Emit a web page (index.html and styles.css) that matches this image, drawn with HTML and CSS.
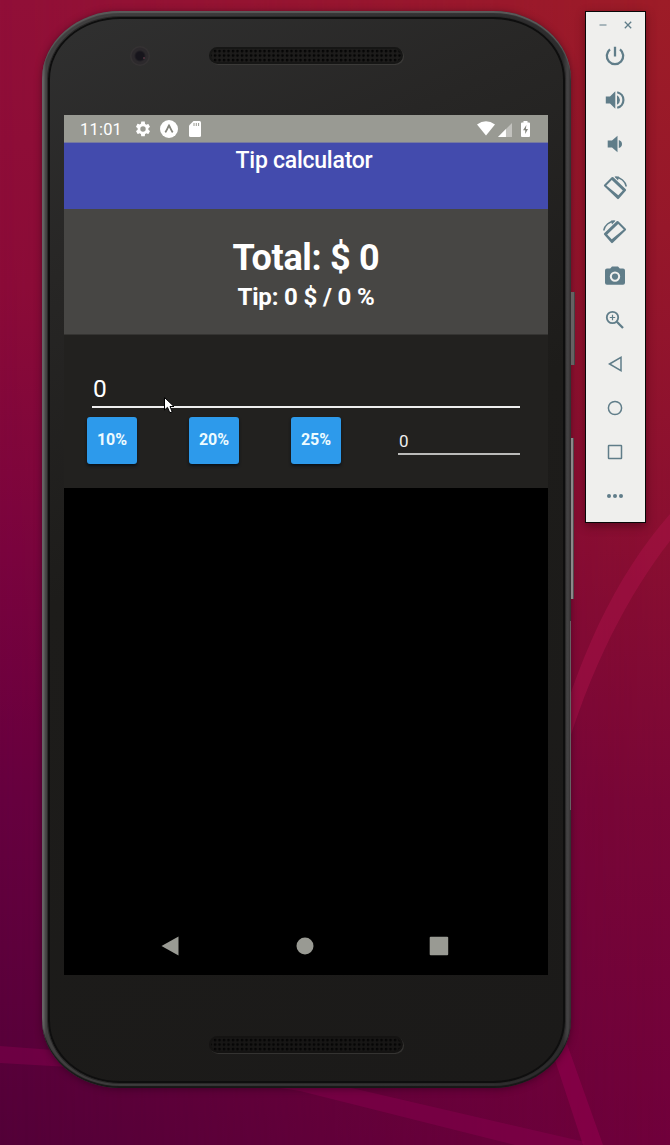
FILE: index.html
```html
<!DOCTYPE html>
<html lang="en">
<head>
<meta charset="utf-8">
<title>Tip calculator</title>
<link rel="stylesheet" href="styles.css">
</head>
<body>
<svg class="wallpaper" viewBox="0 0 670 1145" aria-hidden="true">
  <path d="M670 514C615 576 574 665 550 765L562 765C589 668 630 592 670 541Z" fill="#b0124d" opacity=".42"/>
  <path d="M0 1046L200 1061L330 1083L585 1142L582 1145H515L300 1091L190 1074L0 1063Z" fill="#8f0052" opacity=".4"/>
  <path d="M555 1060L567 1044L603 1145H583Z" fill="#93004f" opacity=".55"/>
</svg>
<main class="desktop">
  <section class="phone">
    <div class="bezel">
      <div class="forehead">
        <span class="lens"></span>
        <span class="speaker"></span>
      </div>
      <div class="screen">
        <div class="status">
          <span class="time">11:01</span>
          <svg class="gear" viewBox="0 0 24 24"><path fill-rule="evenodd" d="M19.14 12.94c.04-.3.06-.61.06-.94s-.02-.64-.07-.94l2.03-1.58a.5.5 0 0 0 .12-.61l-1.92-3.32a.49.49 0 0 0-.59-.22l-2.39.96a7 7 0 0 0-1.62-.94l-.36-2.54A.48.48 0 0 0 13.92 2h-3.84a.48.48 0 0 0-.47.41l-.36 2.54c-.59.24-1.13.57-1.62.94l-2.39-.96a.48.48 0 0 0-.59.22L2.74 8.87a.48.48 0 0 0 .12.61l2.03 1.58a6 6 0 0 0 0 1.88l-2.03 1.58a.5.5 0 0 0-.12.61l1.92 3.32c.12.22.37.29.59.22l2.39-.96c.5.38 1.03.7 1.62.94l.36 2.54c.05.24.24.41.48.41h3.84c.24 0 .44-.17.47-.41l.36-2.54a7 7 0 0 0 1.62-.94l2.39.96c.22.08.47 0 .59-.22l1.92-3.32a.48.48 0 0 0-.12-.61ZM12 15.600a3.600 3.600 0 1 1 0-7.200 3.600 3.600 0 0 1 0 7.200Z"/></svg>
          <svg class="expo" viewBox="0 0 18 18"><circle cx="9" cy="9" r="9"/><path d="M5.300 12.300C6.800 10.500 7.800 7.500 9 5.500C10.200 7.500 11.200 10.500 12.700 12.300" fill="none" stroke="#84857d" stroke-width="1.800"/></svg>
          <svg class="card" viewBox="0 0 12 16"><path d="M4.500 0H10.500Q12 0 12 1.500V14.500Q12 16 10.500 16H1.500Q0 16 0 14.500V4.500Z"/><path d="M5 2V5M7.300 2V5M9.600 2V5" stroke="#999a93"/></svg>
          <span class="spacer"></span>
          <svg class="wifi" viewBox="0 0 18 15"><path d="M0 3.500Q9-3 18 3.500L9 14.500Z"/></svg>
          <svg class="signal" viewBox="0 0 15 15"><path d="M15 0V15H0Z" opacity=".4"/><path d="M8.500 6.500V15H0Z"/></svg>
          <svg class="battery" viewBox="0 0 9 16"><path d="M2.500 0H6.500V1.500H8Q9 1.500 9 2.500V15Q9 16 8 16H1Q0 16 0 15V2.500Q0 1.500 1 1.500H2.500Z"/><path d="M5.400 4L2 9.200H4.200V13L7 8H4.900Z" fill="#85867f"/></svg>
        </div>
        <header class="title">Tip calculator</header>
        <div class="totals">
          <div class="total">Total: $ 0</div>
          <div class="tip">Tip: 0 $ / 0 %</div>
        </div>
        <div class="form">
          <div class="amount">0</div>
          <div class="choices">
            <span class="btn">10%</span>
            <span class="btn">20%</span>
            <span class="btn">25%</span>
            <span class="custom">0</span>
          </div>
        </div>
        <div class="empty"></div>
        <div class="nav">
          <svg viewBox="0 0 20 20"><path d="M1.500 10L18.500 0.500V19.500Z"/></svg>
          <svg viewBox="0 0 20 20"><circle cx="10" cy="10" r="8.500"/></svg>
          <svg viewBox="0 0 20 20"><rect x=".7" y=".7" width="18.500" height="18.500" rx="1"/></svg>
        </div>
      </div>
      <div class="chin"><span class="speaker"></span></div>
    </div>
    <span class="key power"></span>
    <span class="key volume"></span>
    <span class="key edge"></span>
  </section>
  <aside class="toolbar">
    <div class="window-buttons">
      <svg viewBox="0 0 8 8"><path d="M.5 4H7.500" stroke-width="1"/></svg>
      <svg viewBox="0 0 8 8"><path d="M.8.8L7.200 7.200M7.200.8L.8 7.200" stroke-width="1.300"/></svg>
    </div>
    <svg class="tool" viewBox="0 0 24 24"><path d="M12 2.800V12.500M7 5.400A8.200 8.200 0 1 0 17 5.400" fill="none" stroke="#607d89" stroke-width="2.300"/></svg>
    <svg class="tool" viewBox="0 0 24 24"><path d="M2.800 8.600H7L12.300 3.300V20.700L7 15.400H2.800ZM14 7.300Q17 9 17 12T14 16.700Z"/><path d="M14.200 4.200A8 8 0 0 1 14.200 19.800" fill="none" stroke="#607d89" stroke-width="2.200"/></svg>
    <svg class="tool" viewBox="0 0 24 24"><path d="M4.700 8.600H9L14.500 3.800V20.200L9 15.400H4.700ZM15.800 7.900Q19 9 19 12T15.800 16.100Z"/></svg>
    <svg class="tool" viewBox="0 0 24 24"><path fill-rule="evenodd" d="M8.700 1.300Q9.500.7 10.300 1.300L22.800 13.300Q23.500 14 22.800 14.800L15.800 22.800Q15 23.500 14.200 22.800L1.200 10.300Q.5 9.500 1.200 8.700ZM8.800 4L3.300 9.400L15.300 19.300L19.800 14.500Z"/><path d="M12.500 1.300A11.500 11.500 0 0 1 23.300 10.500" fill="none" stroke="#607d89" stroke-width="1.500"/><path d="M11.500.5H16L15 4.500Z"/></svg>
    <svg class="tool mirrored" viewBox="0 0 24 24"><path fill-rule="evenodd" d="M8.700 1.300Q9.500.7 10.300 1.300L22.800 13.300Q23.500 14 22.800 14.800L15.800 22.800Q15 23.500 14.200 22.800L1.200 10.300Q.5 9.500 1.200 8.700ZM8.800 4L3.300 9.400L15.300 19.300L19.800 14.500Z"/><path d="M12.500 1.300A11.500 11.500 0 0 1 23.300 10.500" fill="none" stroke="#607d89" stroke-width="1.500"/><path d="M11.500.5H16L15 4.500Z"/></svg>
    <svg class="tool" viewBox="0 0 24 24"><path fill-rule="evenodd" d="M9 2.500L7.200 4.500H4a2 2 0 0 0-2 2V18.800a2 2 0 0 0 2 2H20a2 2 0 0 0 2-2V6.500a2 2 0 0 0-2-2H16.800L15 2.500ZM12 7.400a5.200 5.200 0 1 1 0 10.400 5.200 5.200 0 0 1 0-10.400Z"/><circle cx="12" cy="12.600" r="3.100"/></svg>
    <svg class="tool" viewBox="0 0 24 24"><g fill="none" stroke="#607d89"><circle cx="9.500" cy="9.500" r="5.700" stroke-width="1.800"/><path d="M13.800 13.800L20 20" stroke-width="2.300"/><path d="M9.500 6.800V12.200M6.800 9.500H12.200" stroke-width="1.200"/></g></svg>
    <svg class="tool" viewBox="0 0 24 24"><path d="M6.500 12L18 5.300V18.700Z" fill="none" stroke="#607d89" stroke-width="1.500"/></svg>
    <svg class="tool" viewBox="0 0 24 24"><circle cx="12" cy="12" r="6.600" fill="none" stroke="#607d89" stroke-width="1.500"/></svg>
    <svg class="tool" viewBox="0 0 24 24"><rect x="5.500" y="5.500" width="13" height="13" rx=".5" fill="none" stroke="#607d89" stroke-width="1.500"/></svg>
    <svg class="tool" viewBox="0 0 24 24"><circle cx="6" cy="12" r="2"/><circle cx="12" cy="12" r="2"/><circle cx="18" cy="12" r="2"/></svg>
  </aside>
</main>
<svg class="cursor" viewBox="0 0 11 17"><path d="M.5.500V13L3.500 10.300L5.800 15.800L8.200 14.800L6 9.500H10Z" fill="#fff" stroke="#000"/></svg>
</body>
</html>
```

FILE: styles.css
```css
* { box-sizing: border-box; }

body {
  margin: 0;
  height: 1145px;
  overflow: hidden;
  position: relative;
  font-family: Roboto, sans-serif;
  color: #fff;
  background: linear-gradient(#910f38, #8b0b38 25%, #7a043e 48%, #66003f 70%, #530038);
}

body::before {
  content: "";
  position: absolute;
  inset: 0;
  background: linear-gradient(#9d1c27, #96172a 20%, #8b0f30 45%, #7a0636 70%, #70003b);
  -webkit-mask-image: linear-gradient(90deg, transparent, #000);
  mask-image: linear-gradient(90deg, transparent, #000);
}

.wallpaper { position: absolute; left: 0; top: 0; width: 670px; height: 1145px; }

.desktop {
  position: relative;
  display: flex;
  align-items: flex-start;
  gap: 14px;
  padding: 11px 0 0 42px;
}

.phone {
  position: relative;
  width: 529px;
  height: 1077px;
  padding: 2px;
  border-radius: 78px / 68px;
  background: linear-gradient(90deg, #777475, #414040 4px, #353435 50%, #2d2c2d 521px, #454445 526px, #302c2d);
  box-shadow: inset 0 2px 1px #5c5b5b, inset 0 -2px 1px #171717, 0 1px 7px rgba(30, 0, 20, .5);
}

.bezel {
  height: 1066px;
  margin: 4px 4px 0;
  border: 2px solid #0e0e0e;
  border-radius: 72px / 62px;
  background: linear-gradient(155deg, #303030, #272625 20%, #1d1c1a 45%, #1b1a19);
  padding: 0 14px;
  box-shadow: 0 0 0 1px #2a2929;
}

.forehead { height: 96px; display: flex; align-items: flex-start; padding: 28px 0 0 66px; gap: 59px; }

.lens {
  width: 20px;
  height: 20px;
  margin-top: -1px;
  border-radius: 50%;
  background:
    radial-gradient(circle at 14px 12px, #6a3d4c 0, transparent 1.500px),
    radial-gradient(circle at 10px 10px, #17151c 0 4px, #2c292c 6px 8px, #353233 9px);
}

.speaker {
  width: 194px;
  height: 17px;
  border-radius: 9px;
  border: 2px solid #161615;
  background: radial-gradient(circle at 2px 2px, #050505 1px, transparent 1.700px) 2px 0 / 4.500px 4.500px, #1d1c1b;
  box-shadow: 1px 1px 0 #3b3a38;
}

.screen { height: 860px; width: 484px; background: #000; display: flex; flex-direction: column; }

.status { height: 28px; background: #999a93; display: flex; align-items: center; padding: 0 18px 0 16px; border-bottom: 1px solid #777aa0; }
.status svg { fill: #fff; display: block; }
.time { font-size: 16.500px; letter-spacing: .2px; width: 54px; padding-top: 2px; }
.gear { width: 18px; height: 18px; margin-right: 8px; }
.expo { width: 18px; height: 18px; margin-right: 11px; }
.card { width: 12px; height: 16px; }
.spacer { flex: 1; }
.wifi { width: 18px; height: 15px; margin-right: 3px; }
.signal { width: 14px; height: 14px; margin: 2px 9px 0 0; }
.battery { width: 9px; height: 16px; }

.title { height: 66px; background: #434bad; text-align: center; font-size: 23px; letter-spacing: -.25px; font-weight: 500; line-height: 35px; padding-right: 4px; }

.totals { height: 126px; background: #474644; text-align: center; font-weight: 700; padding-top: 28px; border-bottom: 1px solid #353432; }
.total { font-size: 36px; line-height: 42px; letter-spacing: -.3px; }
.tip { font-size: 24px; line-height: 36px; letter-spacing: -.15px; }

.form { height: 153px; background: #22211f; padding: 35px 28px 0; }
.amount { height: 38px; font-size: 24.500px; line-height: 37px; padding-left: 1px; border-bottom: 2px solid #eee; }
.choices { display: flex; align-items: flex-start; margin: 9px 0 0 -5px; gap: 52px; }
.btn {
  width: 50px;
  height: 47px;
  border-radius: 3px;
  background: #2d9aeb;
  text-align: center;
  font-size: 16px;
  font-weight: 700;
  line-height: 45px;
  color: #edfbff;
  box-shadow: 0 2px 3px #0b1117;
}
.custom { flex: 1; margin-left: 5px; height: 38px; padding: 0 1px; border-bottom: 2px solid #bbbbb9; font-size: 17px; line-height: 49px; color: #eee; }

.empty { flex: 1; }
.nav { height: 58px; display: flex; justify-content: space-between; align-items: center; padding: 0 99px 0 96px; }
.nav svg { width: 20px; height: 20px; fill: #999a93; }

.chin { display: flex; justify-content: center; padding: 61px 1px 0 0; }
.chin .speaker { border-color: #141312; background-color: #171615; box-shadow: 1px 1px 0 #343331; }

.key { position: absolute; width: 4px; background: #656263; }
.power { left: 529px; top: 281px; height: 73px; border-right: 1px solid #444; }
.volume { left: 529px; top: 427px; height: 161px; width: 3px; background: #8b888a; border-right: 1px solid #514b4d; }
.edge { left: 528px; top: 610px; width: 1px; height: 189px; }

.toolbar {
  width: 61px;
  height: 512px;
  padding-right: 1px;
  border: 1px solid #080808;
  background: #efefed;
  display: flex;
  flex-direction: column;
  align-items: center;
  box-shadow: 0 3px 9px rgba(40, 0, 10, .45);
}
.window-buttons { display: flex; gap: 17px; height: 26px; padding-top: 9px; }
.window-buttons svg { width: 8px; height: 8px; fill: none; stroke: #607d89; }
.tool { width: 24px; height: 24px; margin: 6px 0 14px; fill: #607d89; flex: none; }
.mirrored { transform: scaleX(-1); }

.cursor { position: absolute; left: 164px; top: 397px; width: 11px; height: 17px; }
```
